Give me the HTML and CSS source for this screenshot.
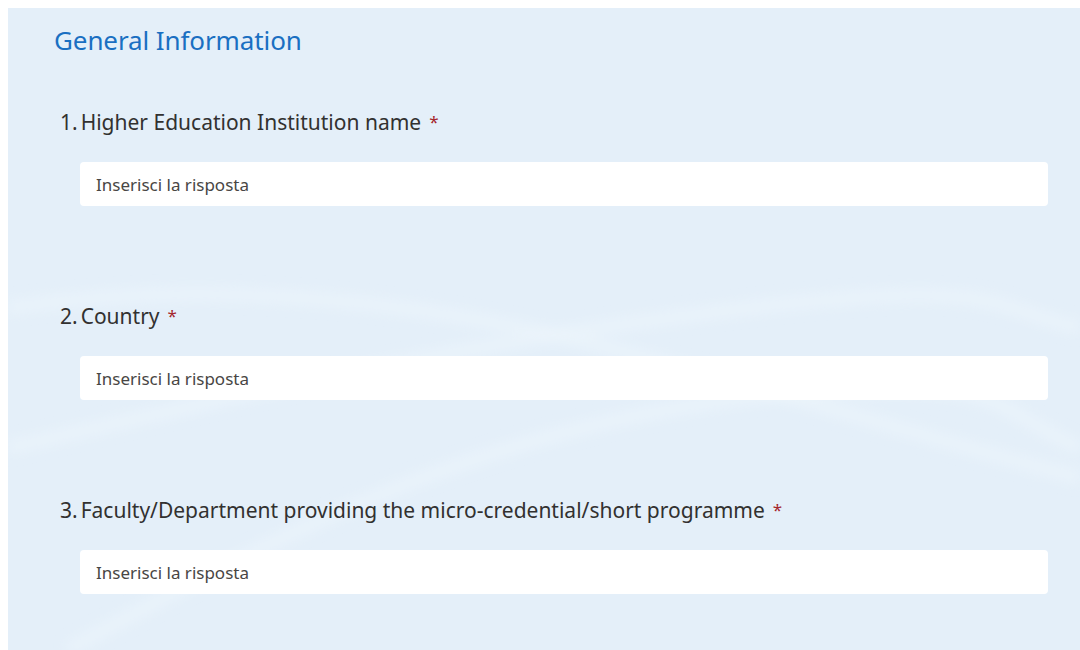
FILE: index.html
```html
<!DOCTYPE html>
<html lang="en">
<head>
<meta charset="utf-8">
<title>General Information</title>
<link rel="stylesheet" href="styles.css">
</head>
<body>
<main class="panel">
  <svg class="panel-waves" viewBox="0 0 1072 642" preserveAspectRatio="none" aria-hidden="true">
    <defs>
      <filter id="soft" x="-10%" y="-10%" width="120%" height="120%">
        <feGaussianBlur stdDeviation="6" />
      </filter>
    </defs>
    <g filter="url(#soft)">
      <path d="M0 300 C 200 270, 420 290, 640 350 S 920 430, 1072 470" />
      <path d="M0 440 C 260 380, 480 330, 740 300 S 980 300, 1072 320" />
      <path d="M60 642 C 280 520, 480 420, 740 390 S 980 400, 1072 440" />
    </g>
  </svg>
  <h1 class="section-title">General Information</h1>
  <section class="question">
    <div class="question-label"><span class="q-num">1.</span>Higher Education Institution name<span class="required">*</span></div>
    <div class="answer">Inserisci la risposta</div>
  </section>
  <section class="question">
    <div class="question-label"><span class="q-num">2.</span>Country<span class="required">*</span></div>
    <div class="answer">Inserisci la risposta</div>
  </section>
  <section class="question">
    <div class="question-label"><span class="q-num">3.</span>Faculty/Department providing the micro-credential/short programme<span class="required">*</span></div>
    <div class="answer">Inserisci la risposta</div>
  </section>
</main>
</body>
</html>
```
FILE: styles.css
```css
html, body {
  margin: 0;
  padding: 0;
  background: #ffffff;
}

body {
  font-family: "Noto Sans", "Open Sans", sans-serif;
  color: #242424;
  overflow: hidden;
}

.panel {
  position: relative;
  margin: 8px 0 0 8px;
  height: 642px;
  padding: 14px 32px 0 46px;
  background: #e4eff9;
  box-sizing: border-box;
  display: flex;
  flex-direction: column;
  overflow: hidden;
}

/* faint light bands drifting across the panel */
.panel-waves {
  position: absolute;
  inset: 0;
  width: 100%;
  height: 100%;
  pointer-events: none;
}

.panel-waves path {
  fill: none;
  stroke: #edf5fc;
  stroke-width: 14;
  opacity: 0.6;
}

.section-title {
  position: relative;
  margin: 0 0 50px 0;
  font-size: 26px;
  line-height: 36px;
  font-weight: 400;
  color: #1a6fc2;
  letter-spacing: -0.1px;
}

.question {
  position: relative;
  display: flex;
  flex-direction: column;
  gap: 26px;
  margin-bottom: 96px;
}

.question-label {
  padding-left: 6px;
  font-size: 21px;
  line-height: 28px;
  color: #323130;
}

.q-num {
  margin-right: 3px;
}

.required {
  margin-left: 8px;
  font-size: 17px;
  vertical-align: 2px;
  color: #a4262c;
}

.answer {
  margin-left: 26px;
  height: 44px;
  padding: 0 16px;
  display: flex;
  align-items: center;
  background: #ffffff;
  border-radius: 4px;
  font-size: 17px;
  color: #484644;
}
```
